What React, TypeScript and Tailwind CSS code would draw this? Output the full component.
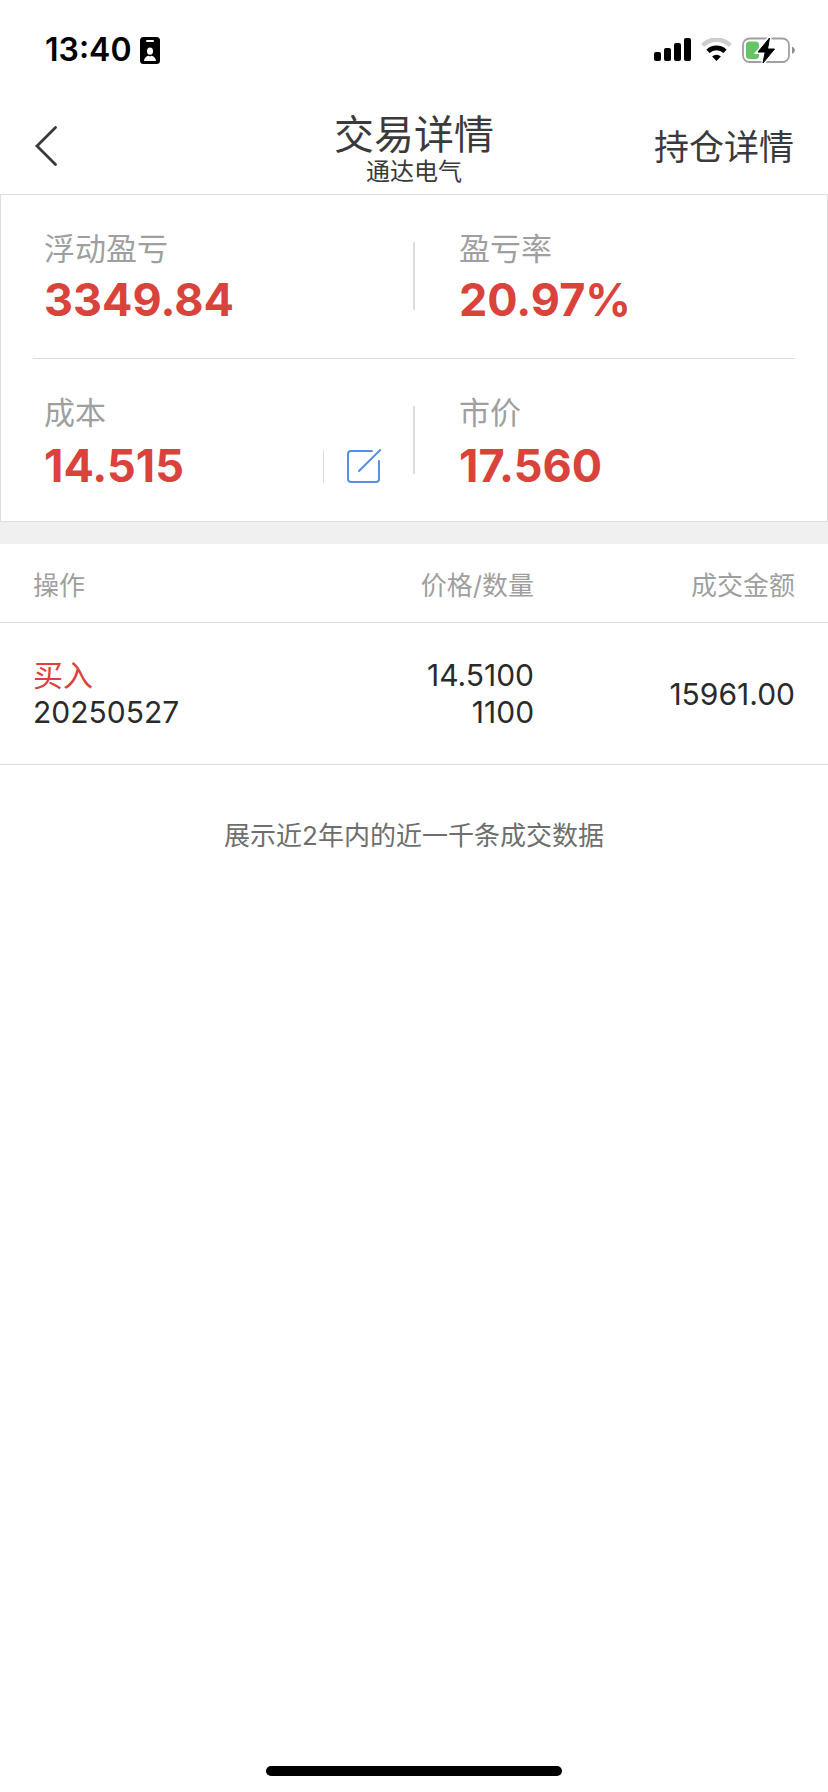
import { useState } from "react";

type Trade = {
  side: string;
  date: string;
  price: string;
  quantity: string;
  amount: string;
};

const trades: Trade[] = [
  { side: "买入", date: "20250527", price: "14.5100", quantity: "1100", amount: "15961.00" },
];

function StatusBar() {
  return (
    <div className="flex h-[100px] items-center justify-between pr-[33px] pl-[45px] text-black">
      <div className="flex items-center gap-2">
        <span className="text-[32px] leading-10 font-semibold">13:40</span>
        <svg className="h-[27px] w-5" viewBox="0 0 20 27" aria-hidden="true">
          <rect width="20" height="27" rx="3.5" fill="#000" />
          <rect x="6" y="3" width="8" height="2" rx="1" fill="#fff" />
          <ellipse cx="10" cy="14.2" rx="3" ry="3.6" fill="#fff" />
          <path d="M4 24c0-3 2.300-4.800 4.600-5.200L10 19.500l1.400-.7C13.700 19.200 16 21 16 24z" fill="#fff" />
        </svg>
      </div>
      <div className="flex items-center gap-[10px]">
        <svg className="h-6 w-[37px]" viewBox="0 0 37 24" aria-hidden="true">
          <rect x="0" y="14" width="7" height="9" rx="2" />
          <rect x="10" y="10" width="7" height="13" rx="2" />
          <rect x="20" y="5" width="7" height="18" rx="2" />
          <rect x="30" y="0" width="7" height="23" rx="2" />
        </svg>
        <svg className="h-6 w-[31px]" viewBox="0 0 31 24" fill="none" aria-hidden="true">
          <path d="M1.700 7.400a19.500 19.500 0 0 1 27.600 0" stroke="#cdcdcd" strokeWidth="4.600" />
          <path d="M7 13.400a12 12 0 0 1 17 0" stroke="#000" strokeWidth="4.600" />
          <path d="M15.500 23l-4.400-4.400a6.300 6.300 0 0 1 8.800 0z" fill="#000" />
        </svg>
        <svg className="h-[27px] w-[53px]" viewBox="0 0 53 27" aria-hidden="true">
          <rect x="1" y="1.500" width="46" height="23.500" rx="6.500" fill="none" stroke="#a0a0a0" strokeWidth="1.800" />
          <path d="M50 9.700c3.700.8 3.700 6.200 0 7z" fill="#8e8e8e" />
          <rect x="4" y="4.500" width="13" height="17.500" rx="3.500" fill="#65c466" />
          <path d="M27.500 1L16 15h7.200L21 26 32.500 12h-7z" fill="#000" stroke="#fff" strokeWidth="4" />
          <path d="M27.500 1L16 15h7.200L21 26 32.500 12h-7z" fill="#000" stroke="#000" strokeLinejoin="round" />
        </svg>
      </div>
    </div>
  );
}

function NavBar() {
  return (
    <header className="grid h-[94px] grid-cols-3 items-center px-[34px] text-[#3a3a3a]">
      <button type="button" aria-label="返回" className="justify-self-start">
        <svg className="h-[42px] w-6" viewBox="0 0 24 42" fill="none" aria-hidden="true">
          <path d="M21.500 1.500L3 20l18.500 18.500" stroke="#383838" strokeWidth="2.800" strokeLinecap="round" />
        </svg>
      </button>
      <div className="flex flex-col items-center pt-1.5 whitespace-nowrap">
        <h1 className="text-[40px] leading-[44px]">交易详情</h1>
        <p className="text-2xl leading-[30px]">通达电气</p>
      </div>
      <a href="#position" className="justify-self-end text-[35px] leading-10 whitespace-nowrap">
        持仓详情
      </a>
    </header>
  );
}

function Stat({ label, value, spaced = false }: { label: string; value: string; spaced?: boolean }) {
  return (
    <div className={spaced ? "flex flex-col gap-0.5" : "flex flex-col"}>
      <span className="text-[31px] leading-9 text-[#9f9f9f]">{label}</span>
      <span className="text-[45px] leading-[66px] font-bold text-[#d9433b]">{value}</span>
    </div>
  );
}

function Divider() {
  return <div className="mt-[47px] h-[68px] bg-[#dcdcdc]" />;
}

function Summary({ onEdit }: { onEdit: () => void }) {
  return (
    <section className="border border-[#dedede] px-8">
      <div className="grid h-[164px] grid-cols-[1fr_2px_1fr] border-b border-[#dcdcdc]">
        <div className="pt-9 pl-[11px]">
          <Stat label="浮动盈亏" value="3349.84" />
        </div>
        <Divider />
        <div className="pt-9 pl-11">
          <Stat label="盈亏率" value="20.97%" />
        </div>
      </div>
      <div className="grid h-[162px] grid-cols-[1fr_2px_1fr]">
        <div className="flex justify-between pt-9 pr-8 pl-[11px]">
          <Stat label="成本" value="14.515" spaced />
          <div className="mt-[54px] flex h-[34px] items-center gap-[23px]">
            <div className="h-[33px] w-px bg-[#dcdcdc]" />
            <button type="button" aria-label="修改成本" onClick={onEdit}>
              <svg className="block h-[34px] w-[34px]" viewBox="0 0 34 34" fill="none" stroke="#588fe0" strokeWidth="2" strokeLinecap="round" aria-hidden="true">
                <path d="M25 2H4a3 3 0 0 0-3 3v25a3 3 0 0 0 3 3h25a3 3 0 0 0 3-3V12" />
                <path d="M12 22L33.200 1" />
              </svg>
            </button>
          </div>
        </div>
        <Divider />
        <div className="pt-9 pl-11">
          <Stat label="市价" value="17.560" spaced />
        </div>
      </div>
    </section>
  );
}

function TradeTable() {
  return (
    <table className="w-full table-fixed border-collapse">
      <colgroup>
        <col className="w-[34%]" />
        <col />
        <col className="w-[35.5%]" />
      </colgroup>
      <thead>
        <tr className="h-[78px] border-b border-[#dcdcdc] text-[26px] leading-8 text-[#9f9f9f]">
          <th scope="col" className="pt-1.5 pl-[33px] text-left font-normal">操作</th>
          <th scope="col" className="pt-1.5 text-right font-normal">价格/数量</th>
          <th scope="col" className="pt-1.5 pr-[33px] text-right font-normal">成交金额</th>
        </tr>
      </thead>
      <tbody>
        {trades.map((trade) => (
          <tr key={trade.date} className="h-[142px] border-b border-[#dcdcdc] text-[30px] leading-[37px] text-[#2a2a2a]">
            <td className="pt-0.5 pl-[33px]">
              <div className="text-[#d9433b]">{trade.side}</div>
              <div>{trade.date}</div>
            </td>
            <td className="pt-0.5 text-right">
              <div>{trade.price}</div>
              <div>{trade.quantity}</div>
            </td>
            <td className="pt-0.5 pr-[33px] text-right">{trade.amount}</td>
          </tr>
        ))}
      </tbody>
    </table>
  );
}

export default function App() {
  const [, setEditing] = useState(false);
  return (
    <div className="flex min-h-screen flex-col bg-white font-['Inter','Noto_Sans_CJK_SC',sans-serif]">
      <StatusBar />
      <NavBar />
      <main className="flex-1">
        <Summary onEdit={() => setEditing(true)} />
        <div className="h-[22px] bg-[#f0f0f0]" />
        <TradeTable />
        <p className="pt-[55px] text-center text-[26px] leading-8 text-[#6e6e6e]">展示近2年内的近一千条成交数据</p>
      </main>
      <footer className="flex justify-center pb-4">
        <div className="h-[10px] w-[296px] rounded-full bg-black" />
      </footer>
    </div>
  );
}
